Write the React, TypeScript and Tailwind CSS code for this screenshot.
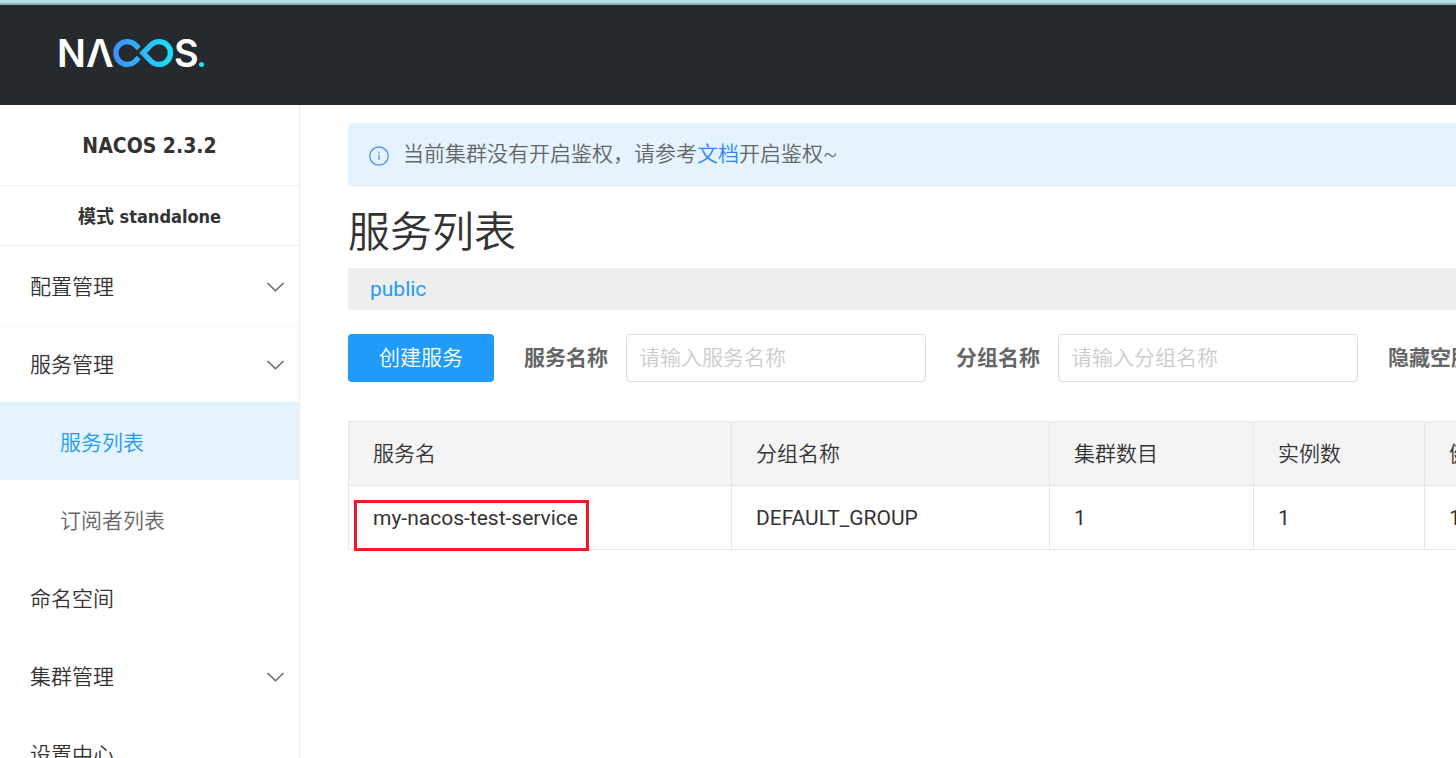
import React from "react";

const columns = [
  { title: "服务名", width: "w-[383px]" },
  { title: "分组名称", width: "w-[318px]" },
  { title: "集群数目", width: "w-[204px]" },
  { title: "实例数", width: "w-[171px]" },
  { title: "健康实例数", width: "w-[204px]" },
];

function Logo() {
  return (
    <svg viewBox="-8 -16 164 64" className="h-16 w-[164px]" role="img" aria-label="NACOS">
      <defs>
        <linearGradient id="loop" gradientUnits="userSpaceOnUse" x1="54" y1="0" x2="114" y2="0">
          <stop offset="0" stopColor="#428dff" />
          <stop offset="1" stopColor="#18e4f8" />
        </linearGradient>
      </defs>
      <g fill="#fff" fontFamily="Inter, sans-serif" fontWeight="600" fontSize="38">
        <text x="-3" y="30">N</text>
        <text x="26" y="30">Λ</text>
        <text x="114" y="30">S</text>
      </g>
      <g fill="none" stroke="url(#loop)" strokeWidth="5.4">
        <path d="M78.8 11.4 L75.3 7.9 A11.4 11.4 0 1 0 75.3 24.1 L78.8 20.6" />
        <path d="M83 16 L91 7.9 A11.4 11.4 0 1 1 91 24.1 Z" />
      </g>
      <circle cx="141.5" cy="27.6" r="2.5" fill="#18e4f8" />
    </svg>
  );
}

function Chevron() {
  return (
    <svg viewBox="0 0 18 18" className="size-[18px]" fill="none" stroke="#666" strokeWidth="1.5" aria-hidden="true">
      <path d="M1.5 5 L9.5 12.8 L17.5 5" />
    </svg>
  );
}

function Group({ label, className = "" }: { label: string; className?: string }) {
  return (
    <button type="button" className={`flex h-[78px] w-full items-center justify-between pt-1 pr-[15px] pl-[30px] text-left ${className}`}>
      {label}
      <Chevron />
    </button>
  );
}

function Field({ id, label, placeholder }: { id: string; label: string; placeholder: string }) {
  return (
    <div className="flex shrink-0 items-center gap-[18px]">
      <label htmlFor={id} className="font-bold text-[#666]">{label}</label>
      <input
        id={id}
        placeholder={placeholder}
        className="h-12 w-[300px] rounded-[4px] border border-[#dcdee3] px-3 placeholder:text-[#ccc]"
      />
    </div>
  );
}

export default function App() {
  return (
    <div className="flex h-screen flex-col overflow-hidden bg-white font-['Roboto','Noto_Sans_CJK_SC',sans-serif] text-[21px] leading-[30px] font-[350] text-[#333]">
      <header className="flex h-[105px] shrink-0 items-center border-t-3 border-[#b7e1e5] bg-[#252a2f]">
        <div className="flex h-full w-full items-center border-t-2 border-[#8fb1b5] pb-1 pl-[52px]">
          <Logo />
        </div>
      </header>
      <div className="flex min-h-0 flex-1">
        <aside className="w-[300px] shrink-0 overflow-hidden border-r border-[#eee]">
          <h1 className="flex h-[81px] items-center justify-center border-b border-[#eee] pt-[2px] font-['DejaVu_Sans_Condensed','Noto_Sans','Noto_Sans_CJK_SC',sans-serif] font-bold">
            NACOS 2.3.2
          </h1>
          <h2 className="flex h-[60px] items-center justify-center border-b border-[#eee] pt-[2px] font-['DejaVu_Sans_Condensed','Noto_Sans','Noto_Sans_CJK_SC',sans-serif] text-[18px] font-bold">
            模式 standalone
          </h2>
          <nav>
            <Group label="配置管理" />
            <Group label="服务管理" className="bg-[#fdfdfd]" />
            <a href="#services" className="flex h-[78px] items-center bg-[#e4f3fe] pt-1 pl-[60px] text-[#209bfa]">服务列表</a>
            <a href="#subscribers" className="flex h-[78px] items-center pt-1 pl-[60px] text-[#666]">订阅者列表</a>
            <a href="#namespaces" className="flex h-[78px] items-center pt-1 pl-[30px]">命名空间</a>
            <Group label="集群管理" />
            <a href="#settings" className="flex h-[78px] items-center pt-1 pl-[30px]">设置中心</a>
          </nav>
        </aside>
        <main className="min-w-0 flex-1 overflow-hidden pt-[18px] pl-12">
          <div className="flex h-16 items-center gap-[14px] rounded-l-[4px] bg-[#e4f3fe] pb-[2px] pl-[21px] text-[#666]">
            <svg viewBox="0 0 20 20" className="mt-1 size-5" fill="none" stroke="#3d8bff" strokeWidth="1.2" aria-hidden="true">
              <circle cx="10" cy="10" r="9.2" />
              <path d="M10 8.6 V14 M10 5.8 V7.2" />
            </svg>
            <p className="whitespace-nowrap">
              当前集群没有开启鉴权，请参考<a href="#docs" className="text-[#2a85ff]">文档</a>开启鉴权~
            </p>
          </div>
          <h2 className="mt-4 text-[42px] leading-[60px]">服务列表</h2>
          <div className="mt-[5px] flex h-[42px] items-center bg-[#eee] pl-[22px]">
            <button type="button" className="font-normal text-[#209bfa]">public</button>
          </div>
          <form className="mt-6 flex items-center gap-[30px] whitespace-nowrap">
            <button type="button" className="h-12 w-[146px] shrink-0 rounded-[4px] bg-[#209bfa] text-white">创建服务</button>
            <Field id="service" label="服务名称" placeholder="请输入服务名称" />
            <Field id="group" label="分组名称" placeholder="请输入分组名称" />
            <span className="shrink-0 font-bold text-[#666]">隐藏空服务</span>
          </form>
          <table className="mt-[39px] w-[1281px] table-fixed border-collapse">
            <thead className="bg-[#f4f4f4]">
              <tr className="h-16">
                {columns.map((c) => (
                  <th key={c.title} className={`border border-[#e6e7eb] px-6 text-left font-[350] ${c.width}`}>{c.title}</th>
                ))}
              </tr>
            </thead>
            <tbody className="font-normal">
              <tr className="h-16">
                <td className="relative border border-[#e6e7eb] px-6">
                  my-nacos-test-service
                  <span className="absolute top-[14px] left-[5px] h-[51px] w-[235px] border-3 border-[#ed1c24]" />
                </td>
                <td className="border border-[#e6e7eb] px-6">DEFAULT_GROUP</td>
                <td className="border border-[#e6e7eb] px-6">1</td>
                <td className="border border-[#e6e7eb] px-6">1</td>
                <td className="border border-[#e6e7eb] px-6">1</td>
              </tr>
            </tbody>
          </table>
        </main>
      </div>
    </div>
  );
}
